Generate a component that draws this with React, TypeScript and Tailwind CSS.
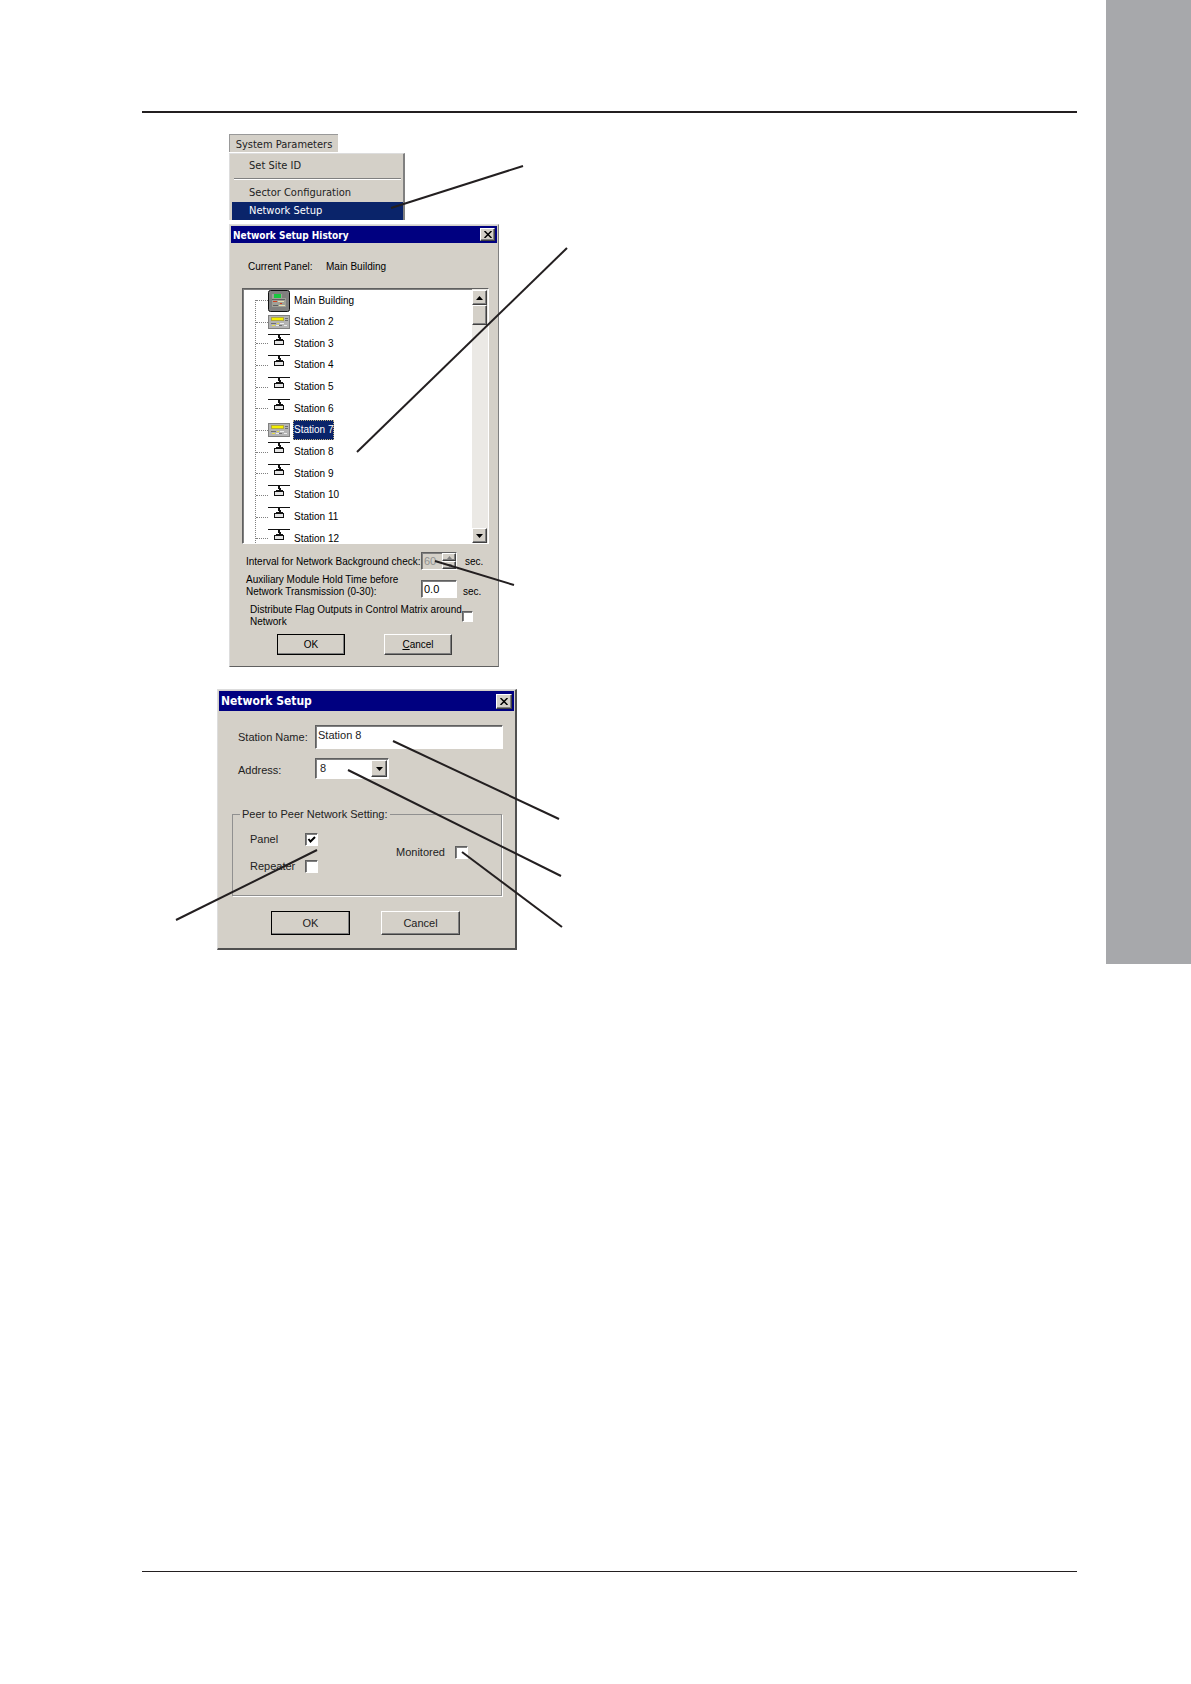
import type { ReactNode } from "react";

type StationIcon = "panel" | "repeater" | "empty";

type Station = {
  name: string;
  icon: StationIcon;
};

const stations: Station[] = [
  { name: "Main Building", icon: "panel" },
  { name: "Station 2", icon: "repeater" },
  { name: "Station 3", icon: "empty" },
  { name: "Station 4", icon: "empty" },
  { name: "Station 5", icon: "empty" },
  { name: "Station 6", icon: "empty" },
  { name: "Station 7", icon: "repeater" },
  { name: "Station 8", icon: "empty" },
  { name: "Station 9", icon: "empty" },
  { name: "Station 10", icon: "empty" },
  { name: "Station 11", icon: "empty" },
  { name: "Station 12", icon: "empty" },
];

// Callout lines over the windows: x1, y1, x2, y2
const callouts = [
  [391, 208, 523, 166],
  [357, 452, 567, 248],
  [435, 561, 514, 585],
  [393, 741, 559, 819],
  [348, 770, 561, 876],
  [462, 852, 562, 927],
  [317, 850, 176, 920],
];

const raised =
  "border border-t-white border-l-white border-r-[#404040] border-b-[#404040] bg-[#d4d0c8] shadow-[inset_-1px_-1px_0_#808080]";
const sunken =
  "border border-t-[#606060] border-l-[#606060] border-r-white border-b-white shadow-[inset_1px_1px_0_#808080]";

function NodeIcon({ icon }: { icon: StationIcon }) {
  if (icon === "panel") {
    return (
      <svg width="22" height="22" viewBox="0 0 22 22" className="shrink-0">
        <rect x="0.5" y="0.5" width="21" height="21" rx="2" fill="#808080" stroke="#111" />
        <rect x="4" y="4" width="14" height="13" fill="#a0a098" />
        <path d="M6 4h7v4H6z" fill="#18c840" />
        <path d="M14 5h4M14 7h4M4 9.500h13M5 15.500h5" stroke="#606060" />
        <path d="M5 11.500h4M12 13.500h2" stroke="#d04020" />
        <path d="M10 11.500h6M11 15.500h6" stroke="#e8e0b0" />
      </svg>
    );
  }
  if (icon === "repeater") {
    return (
      <svg width="22" height="14" viewBox="0 0 22 14" className="shrink-0">
        <rect width="22" height="14" fill="#808080" />
        <rect x="1" y="1" width="20" height="12" fill="#b4b4b4" />
        <rect x="3.500" y="2.500" width="12" height="3" fill="#f4f000" stroke="#b0a840" />
        <path d="M17 3.500h3M17 5.500h3M3 8.500h5M11 10.500h3" stroke="#707070" />
        <path d="M4 10.500h3M9 8.500h2" stroke="#e8e040" />
        <path d="M8 10.500h3M12 8.500h4M16 10.500h3" stroke="#ececec" />
      </svg>
    );
  }
  return (
    <svg width="22" height="22" viewBox="0 0 22 22" className="shrink-0">
      <rect y="1" width="22" height="1" fill="#111" />
      <rect x="10" y="2" width="2" height="3" fill="#111" />
      <rect x="11" y="4" width="2" height="3" fill="#111" />
      <rect x="8" y="6" width="7" height="1" fill="#111" />
      <rect x="6.500" y="7.500" width="9" height="4" fill="#e4e4e4" stroke="#111" />
    </svg>
  );
}

function TitleBar({ title, large }: { title: string; large?: boolean }) {
  return (
    <div className={`flex items-center justify-between bg-[#000080] px-0.5 ${large ? "h-5" : "h-[17px]"}`}>
      <h2
        className={`font-['DejaVu_Sans_Condensed',sans-serif] font-bold whitespace-nowrap text-white ${
          large ? "text-[12px]" : "pt-0.5 text-[10px]"
        }`}
      >
        {title}
      </h2>
      <button
        aria-label="Close"
        className={`flex items-center justify-center ${raised} ${large ? "h-[15px] w-4" : "h-[13px] w-[15px]"}`}
      >
        <svg width="8" height="7" viewBox="0 0 8 7">
          <path d="M0.500 0l7 7M7.500 0l-7 7" stroke="#000" strokeWidth="1.500" />
        </svg>
      </button>
    </div>
  );
}

function Check({ id, checked, small }: { id: string; checked?: boolean; small?: boolean }) {
  return (
    <span className={`relative block shrink-0 ${small ? "size-[11px]" : "size-[13px]"}`}>
      <input
        id={id}
        type="checkbox"
        defaultChecked={checked}
        className={`peer block size-full appearance-none bg-white ${sunken}`}
      />
      <svg
        viewBox="0 0 13 13"
        className="pointer-events-none absolute inset-0 hidden size-full peer-checked:block"
      >
        <path d="M3.500 6l2 2.500 4.500-4.500" fill="none" stroke="#000" strokeWidth="2" />
      </svg>
    </span>
  );
}

function PushButton({ children, primary, large }: { children: ReactNode; primary?: boolean; large?: boolean }) {
  return (
    <button
      className={`${raised} ${large ? "h-6 w-[79px] text-[11px]" : "h-[21px] w-[68px] text-[10px]"} leading-4 ${
        primary ? "outline outline-1 outline-black -outline-offset-1" : ""
      }`}
    >
      {children}
    </button>
  );
}

function Arrow({ up }: { up?: boolean }) {
  return (
    <svg width="7" height="4" viewBox="0 0 7 4">
      <path d={up ? "M0 4h7L3.500 0z" : "M0 0h7L3.500 4z"} fill="#000" />
    </svg>
  );
}

function SystemMenu() {
  return (
    <nav className="w-44 font-['DejaVu_Sans_Condensed',sans-serif] text-[11px] text-[#222]">
      <button className="block h-[18px] w-[109px] border-t border-l border-[#999] bg-[#d4d0c8] pt-0.5 text-center">
        System Parameters
      </button>
      <ul className="mt-px border-t border-l border-r-2 border-t-[#ddd] border-l-[#ddd] border-r-[#808080] bg-[#d4d0c8] pt-[3px] pl-0.5">
        <li className="flex h-[18px] items-center pl-[17px]">Set Site ID</li>
        <li className="mx-0.5 mt-[3px] mb-1 h-0.5 border-t border-b border-t-[#808080] border-b-white" />
        <li className="flex h-[18px] items-center pl-[17px]">Sector Configuration</li>
        <li className="flex h-[18px] items-center bg-[#0a246a] pl-[17px] text-white">Network Setup</li>
      </ul>
    </nav>
  );
}

function HistoryDialog() {
  return (
    <section className="mt-1 h-[443px] w-[270px] border border-t-[#ddd] border-r-[#808080] border-b-[#606060] border-l-[#ddd] bg-[#d4d0c8] p-px text-[10px] text-black">
      <TitleBar title="Network Setup History" />
      <div className="flex gap-[17px] pt-4 pl-[17px] leading-4">
        <span className="w-[61px] whitespace-nowrap">Current Panel:</span>
        <span>Main Building</span>
      </div>

      <div className={`mt-[13px] ml-[11px] flex h-[256px] w-[247px] bg-white ${sunken}`}>
        <div className="relative flex-1 overflow-hidden">
          <div className="absolute top-[11px] bottom-0 left-3 border-l border-dotted border-[#808080]" />
          <ul className="grid h-[261px] grid-rows-12 pt-px">
            {stations.map((s) => (
              <li key={s.name} className="flex h-[21px] items-center pl-[13px]">
                <span className="w-3 shrink-0 border-t border-dotted border-[#808080]" />
                <NodeIcon icon={s.icon} />
                <span
                  className={`ml-[3px] px-px leading-[10px] whitespace-nowrap ${
                    s.name === "Station 7"
                      ? "bg-[#0a246a] py-[5px] text-white outline outline-1 outline-[#c0b080] outline-dotted -outline-offset-1"
                      : ""
                  }`}
                >
                  {s.name}
                </span>
              </li>
            ))}
          </ul>
        </div>
        <div className="flex w-4 flex-col bg-[#ebe9e5] pt-px pr-px">
          <button aria-label="Scroll up" className={`flex h-[15px] items-center justify-center ${raised}`}>
            <Arrow up />
          </button>
          <div className={`h-5 ${raised}`} />
          <button aria-label="Scroll down" className={`mt-auto flex h-[15px] items-center justify-center ${raised}`}>
            <Arrow />
          </button>
        </div>
      </div>

      <div className="mt-2 flex h-[18px] items-center pl-[15px]">
        <label htmlFor="interval" className="w-[175px] whitespace-nowrap">
          Interval for Network Background check:
        </label>
        <span className={`flex h-[18px] w-9 ${sunken}`}>
          <input
            id="interval"
            disabled
            defaultValue="60"
            className="w-5 bg-transparent pl-0.5 text-[11px] text-[#909090]"
          />
          <span className="flex flex-1 flex-col">
            <button aria-label="Increase" disabled className={`flex flex-1 items-center justify-center ${raised}`}>
              <svg width="5" height="3" viewBox="0 0 5 3">
                <path d="M0 3h5L2.500 0z" fill="#808080" />
              </svg>
            </button>
            <button aria-label="Decrease" disabled className={`flex flex-1 items-center justify-center ${raised}`}>
              <svg width="5" height="3" viewBox="0 0 5 3">
                <path d="M0 0h5L2.500 3z" fill="#808080" />
              </svg>
            </button>
          </span>
        </span>
        <span className="ml-2">sec.</span>
      </div>

      <div className="mt-1 flex h-6 items-center pl-[15px]">
        <label htmlFor="hold" className="w-[175px] leading-3 whitespace-nowrap">
          Auxiliary Module Hold Time before
          <br />
          Network Transmission (0-30):
        </label>
        <input
          id="hold"
          defaultValue="0.0"
          className={`mt-1.5 h-[18px] w-9 bg-white pl-0.5 text-[11px] ${sunken}`}
        />
        <span className="mt-2.5 ml-1.5">sec.</span>
      </div>

      <div className="mt-1.5 flex h-6 items-center pl-[19px]">
        <label htmlFor="flags" className="w-[212px] leading-3 whitespace-nowrap">
          Distribute Flag Outputs in Control Matrix around
          <br />
          Network
        </label>
        <Check id="flags" small />
      </div>

      <div className="mt-1.5 flex gap-[39px] pl-[46px]">
        <PushButton primary>OK</PushButton>
        <PushButton>
          <u>C</u>ancel
        </PushButton>
      </div>
    </section>
  );
}

function SetupDialog() {
  return (
    <section className="mt-[22px] -ml-3 h-[261px] w-[300px] border border-t-[#ddd] border-r-2 border-b-2 border-l-[#ddd] border-r-[#505050] border-b-[#505050] bg-[#d4d0c8] p-px text-[11px] text-[#222]">
      <TitleBar title="Network Setup" large />
      <div className="mt-[14px] flex h-6 items-center pl-[19px]">
        <label htmlFor="station" className="w-[77px] whitespace-nowrap">
          Station Name:
        </label>
        <input
          id="station"
          defaultValue="Station 8"
          className={`h-6 w-[188px] bg-white pb-1 pl-0.5 text-[11px] ${sunken}`}
        />
      </div>
      <div className="mt-[9px] flex h-[21px] items-center pl-[19px]">
        <label htmlFor="address" className="w-[77px] pt-1">
          Address:
        </label>
        <span className={`relative flex h-[21px] w-[74px] bg-white p-px ${sunken}`}>
          <select id="address" defaultValue="8" className="w-full appearance-none pl-[3px] text-[11px]">
            <option>7</option>
            <option>8</option>
            <option>9</option>
          </select>
          <span
            className={`pointer-events-none absolute top-px right-px bottom-px flex w-4 items-center justify-center ${raised}`}
          >
            <Arrow />
          </span>
        </span>
      </div>

      <fieldset className="mt-[27px] ml-[13px] flex h-[90px] w-[270px] justify-between border border-[#909090] pl-[17px] shadow-[1px_1px_0_#fff]">
        <legend className="-ml-[10px] px-0.5 leading-4">Peer to Peer Network Setting:</legend>
        <div className="flex flex-col gap-[11px] pt-[9px]">
          <div className="flex h-4 items-center">
            <label htmlFor="panel" className="w-[55px]">
              Panel
            </label>
            <Check id="panel" checked />
          </div>
          <div className="flex h-4 items-center">
            <label htmlFor="repeater" className="w-[55px]">
              Repeater
            </label>
            <Check id="repeater" />
          </div>
        </div>
        <div className="mt-[22px] flex h-4 items-center pr-[33px]">
          <label htmlFor="monitored" className="w-[59px]">
            Monitored
          </label>
          <Check id="monitored" />
        </div>
      </fieldset>

      <div className="mt-[15px] flex gap-[31px] pl-[52px]">
        <PushButton primary large>
          OK
        </PushButton>
        <PushButton large>Cancel</PushButton>
      </div>
    </section>
  );
}

export default function App() {
  return (
    <div className="relative flex min-h-screen bg-white font-['Liberation_Sans',Arial,sans-serif]">
      <main className="mr-[29px] ml-[142px] flex flex-1 flex-col pt-[111px] pb-[112px]">
        <div className="flex-1 border-t-2 border-b border-[#231f20] pt-[21px] pl-[87px]">
          <SystemMenu />
          <HistoryDialog />
          <SetupDialog />
        </div>
      </main>
      <aside className="h-[964px] w-[85px] bg-[#a7a8ab]" />

      <svg className="pointer-events-none absolute top-0 left-0" width="600" height="960" viewBox="0 0 600 960">
        {callouts.map(([x1, y1, x2, y2]) => (
          <line key={`${x1}-${y1}`} x1={x1} y1={y1} x2={x2} y2={y2} stroke="#231f20" strokeWidth="2" />
        ))}
      </svg>
    </div>
  );
}
